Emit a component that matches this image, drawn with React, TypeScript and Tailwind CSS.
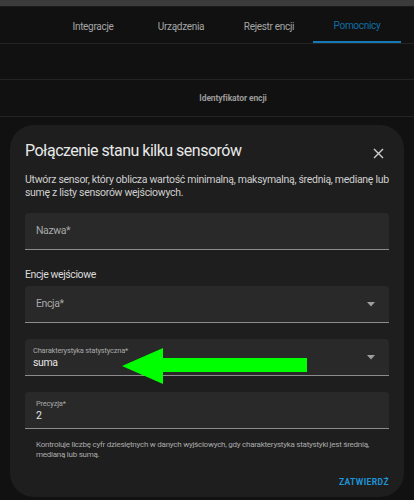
import React from 'react';

const tabs = ['Integracje', 'Urządzenia', 'Rejestr encji', 'Pomocnicy'];

function Caret() {
  return (
    <svg width="8" height="5" viewBox="0 0 8 5" className="shrink-0">
      <path d="M0 0 L8 0 L4 4.5 Z" fill="#9e9e9e" />
    </svg>
  );
}

interface FieldI {
  label: string;
  value?: string;
  select?: boolean;
  tight?: boolean;
}

function Field({ label, value, select, tight }: FieldI) {
  return (
    <div
      className={`h-[37px] bg-[#292929] rounded-t-[4px] border-b border-[#8c8c8c] flex items-center pr-[14px] ${
        tight ? 'pl-[8px]' : 'pl-[11px]'
      }`}
    >
      {value ? (
        <div className="flex-1 flex flex-col">
          <span className="text-[7.5px] leading-[11px] tracking-[-0.2px] text-[#a8a8a8]">{label}</span>
          <span className="text-[10.5px] leading-[13px] tracking-[-0.4px] text-[#e6e6e6]">{value}</span>
        </div>
      ) : (
        <span className="flex-1 text-[10.5px] tracking-[-0.4px] text-[#a8a8a8]">{label}</span>
      )}
      {select && <Caret />}
    </div>
  );
}

export default function App() {
  return (
    <div className="w-[414px] h-[500px] bg-[#111111] overflow-hidden font-['Roboto',sans-serif] relative">
      {/* top bar */}
      <div className="h-[6px] bg-[#3b3b3b]" />
      <div className="h-[1px] bg-[#1a1a1a]" />
      {/* tabs */}
      <div className="h-[37px] flex justify-end pr-[13px] border-b border-[#242424]">
        {tabs.map((t, i) => (
          <div
            key={t}
            className={`w-[88px] flex items-center justify-center text-[10px] tracking-[-0.3px] pt-[2px] ${
              i === 3 ? 'text-[#0f6ea3] border-b-2 border-[#1479b5]' : 'text-[#a6a6a6]'
            }`}
          >
            {t}
          </div>
        ))}
      </div>
      <div className="h-[36px] border-b border-[#242424]" />
      <div className="h-[37px] border-b border-[#242424] flex items-center justify-center pl-[52px]">
        <span className="text-[8.5px] tracking-[-0.1px] font-bold text-[#9a9a9a]">Identyfikator encji</span>
      </div>

      {/* dialog */}
      <div className="absolute left-[10px] top-[125px] w-[394px] h-[372px] bg-[#1e1e1e] rounded-[24px] px-[15px]">
        <div className="flex items-center justify-between pt-[16px]">
          <h2 className="text-[16px] tracking-[-0.5px] text-[#e8e8e8] leading-[20px]">
            Połączenie stanu kilku sensorów
          </h2>
          <svg width="11" height="11" viewBox="0 0 11 11" className="mr-[5px] mt-[4px]">
            <path d="M1 1 L10 10 M10 1 L1 10" stroke="#cfcfcf" strokeWidth="1.4" />
          </svg>
        </div>
        <p className="mt-[13px] text-[10.5px] tracking-[-0.3px] leading-[12.5px] text-[#cfcfcf]">
          Utwórz sensor, który oblicza wartość minimalną, maksymalną, średnią, medianę lub sumę z listy sensorów wejściowych.
        </p>
        <div className="mt-[14px]">
          <Field label="Nazwa*" />
        </div>
        <div className="mt-[18px] text-[10.5px] tracking-[-0.4px] text-[#dcdcdc] leading-[14px]">Encje wejściowe</div>
        <div className="mt-[4px]">
          <Field label="Encja*" select />
        </div>
        <div className="mt-[16px]">
          <Field label="Charakterystyka statystyczna*" value="suma" select tight />
        </div>
        <div className="mt-[16px]">
          <Field label="Precyzja*" value="2" />
        </div>
        <p className="mt-[11px] px-[11px] text-[8px] tracking-[-0.25px] leading-[10px] text-[#aaaaaa]">
          Kontroluje liczbę cyfr dziesiętnych w danych wyjściowych, gdy charakterystyka statystyki jest średnią, medianą lub sumą.
        </p>
        <div className="flex justify-end mt-[16px]">
          <span className="text-[8.5px] font-bold tracking-[0.4px] text-[#1e93d6]">ZATWIERDŹ</span>
        </div>
      </div>

      {/* annotation arrow */}
      <svg className="absolute left-0 top-0" width="414" height="500" viewBox="0 0 414 500">
        <polygon points="122,366 163,348 163,358 307,358 307,372 163,372 163,384" fill="#00ff00" />
      </svg>
    </div>
  );
}
